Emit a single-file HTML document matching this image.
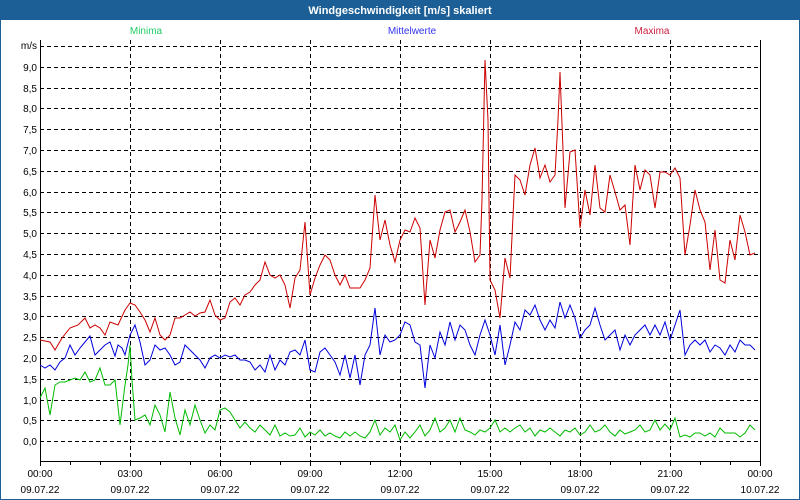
<!DOCTYPE html>
<html><head><meta charset="utf-8"><style>
html,body{margin:0;padding:0;width:800px;height:500px;overflow:hidden;background:#fff}
svg text{font-family:"Liberation Sans","DejaVu Sans",sans-serif}
</style></head><body>
<svg width="800" height="500" xmlns="http://www.w3.org/2000/svg">
<rect x="0" y="0" width="800" height="500" fill="#1c5f96"/>
<rect x="1" y="20" width="798" height="479" fill="#fff"/>
<text x="400" y="14" fill="#fff" font-size="11" font-weight="bold" text-anchor="middle">Windgeschwindigkeit [m/s] skaliert</text>
<text x="146" y="34" fill="#22cc66" font-size="10" text-anchor="middle">Minima</text>
<text x="412" y="34" fill="#3333ee" font-size="10" text-anchor="middle">Mittelwerte</text>
<text x="652" y="34" fill="#cc2244" font-size="10" text-anchor="middle">Maxima</text>
<g stroke="#000" stroke-width="1" stroke-dasharray="4,3" fill="none">
<path d="M40 46.5H760M40 67.5H760M40 88.5H760M40 108.5H760M40 129.5H760M40 150.5H760M40 171.5H760M40 192.5H760M40 212.5H760M40 233.5H760M40 254.5H760M40 275.5H760M40 296.5H760M40 316.5H760M40 337.5H760M40 358.5H760M40 379.5H760M40 400.5H760M40 420.5H760M40 441.5H760"/>
<path d="M130.5 40V461M220.5 40V461M310.5 40V461M400.5 40V461M490.5 40V461M580.5 40V461M670.5 40V461"/>
</g>
<path d="M40.5 40V461.5H760.5V40" stroke="#000" fill="none"/>
<g stroke="#000"><path d="M40.5 461v5M70.5 461v4M100.5 461v4M130.5 461v5M160.5 461v4M190.5 461v4M220.5 461v5M250.5 461v4M280.5 461v4M310.5 461v5M340.5 461v4M370.5 461v4M400.5 461v5M430.5 461v4M460.5 461v4M490.5 461v5M520.5 461v4M550.5 461v4M580.5 461v5M610.5 461v4M640.5 461v4M670.5 461v5M700.5 461v4M730.5 461v4M760.5 461v5"/></g>
<g font-size="10" fill="#000" text-anchor="end">
<text x="37" y="49">m/s</text>
<text x="37" y="71">9,0</text><text x="37" y="92">8,5</text><text x="37" y="112">8,0</text><text x="37" y="133">7,5</text><text x="37" y="154">7,0</text><text x="37" y="175">6,5</text><text x="37" y="196">6,0</text><text x="37" y="216">5,5</text><text x="37" y="237">5,0</text><text x="37" y="258">4,5</text><text x="37" y="279">4,0</text><text x="37" y="300">3,5</text><text x="37" y="320">3,0</text><text x="37" y="341">2,5</text><text x="37" y="362">2,0</text><text x="37" y="383">1,5</text><text x="37" y="404">1,0</text><text x="37" y="424">0,5</text><text x="37" y="445">0,0</text>
</g>
<g font-size="10" fill="#000" text-anchor="middle">
<text x="40" y="477">00:00</text><text x="40" y="493">09.07.22</text>
<text x="130" y="477">03:00</text><text x="130" y="493">09.07.22</text>
<text x="220" y="477">06:00</text><text x="220" y="493">09.07.22</text>
<text x="310" y="477">09:00</text><text x="310" y="493">09.07.22</text>
<text x="400" y="477">12:00</text><text x="400" y="493">09.07.22</text>
<text x="490" y="477">15:00</text><text x="490" y="493">09.07.22</text>
<text x="580" y="477">18:00</text><text x="580" y="493">09.07.22</text>
<text x="670" y="477">21:00</text><text x="670" y="493">09.07.22</text>
<text x="760" y="477">00:00</text><text x="760" y="493">10.07.22</text>
</g>
<polyline fill="none" stroke="#cc0000" stroke-width="1" points="40,340 50,342 55,350 62,338 70,328 78,325 85,318 90,328 95,325 100,328 105,335 110,322 118,325 125,310 130,303 135,305 140,312 145,320 150,332 155,318 160,335 165,340 170,335 175,318 180,318 185,315 190,312 195,316 200,313 205,312 210,300 215,315 220,320 225,318 230,302 235,298 240,305 245,295 250,292 255,285 260,280 265,262 270,275 275,278 280,275 285,285 290,308 295,278 300,270 305,222 310,295 315,278 320,265 325,255 330,260 335,275 340,285 345,275 350,288 355,288 360,288 365,280 370,268 375,195 380,240 385,220 390,245 395,262 400,240 405,230 410,232 415,218 420,228 425,305 430,240 435,258 440,230 445,212 450,210 455,232 460,222 465,210 470,232 475,262 480,255 482,200 485,60 488,120 490,280 495,290 500,318 505,258 510,278 515,175 520,180 525,195 530,165 535,148 540,178 545,165 550,182 555,175 558,120 560,72 563,150 565,208 570,152 575,150 580,228 585,190 590,215 595,165 600,208 605,212 610,175 615,192 620,210 625,205 630,245 635,165 640,190 645,170 650,175 655,208 660,172 665,172 670,175 675,168 680,178 685,255 690,225 695,190 700,210 705,222 710,270 715,230 720,280 725,283 730,240 735,260 740,215 745,232 750,255 755,253"/>
<polyline fill="none" stroke="#0000dd" stroke-width="1" points="40,365 45,368 50,365 55,370 60,362 65,358 70,345 75,355 80,348 85,342 90,336 95,355 100,350 105,345 110,342 115,356 118,345 122,348 125,355 130,335 135,325 140,342 145,365 150,360 155,345 160,350 165,348 170,355 175,365 180,362 185,345 190,350 195,355 200,360 205,368 210,358 215,355 220,358 225,355 230,357 235,355 240,360 245,360 250,362 255,370 260,365 265,372 270,355 275,370 280,360 285,365 290,352 295,350 300,355 305,340 310,370 315,372 320,352 325,348 330,355 335,362 340,375 345,355 350,378 355,355 360,385 365,355 370,345 375,308 380,355 385,335 390,342 395,340 400,335 405,322 410,325 415,342 420,345 425,388 430,345 435,358 440,332 445,345 450,322 455,340 460,325 465,330 470,345 475,355 480,335 485,320 490,335 495,355 500,325 505,365 510,345 515,322 520,330 525,310 530,315 535,305 540,320 545,330 550,320 555,328 560,302 565,318 570,305 575,318 580,338 585,330 590,325 595,308 600,325 605,340 610,335 615,330 620,350 625,335 630,345 635,335 640,330 645,325 650,335 655,325 660,335 665,322 670,340 675,325 680,310 685,355 690,345 695,340 700,345 705,340 710,352 715,345 720,348 725,355 730,345 735,352 740,340 745,345 750,345 755,350"/>
<polyline fill="none" stroke="#00bb00" stroke-width="1" points="40,398 45,388 50,415 55,385 60,382 65,382 70,380 75,378 80,380 85,372 90,382 95,380 100,368 105,385 110,385 115,380 120,425 125,385 128,365 130,345 132,380 135,420 140,418 145,415 150,425 155,405 160,415 165,432 170,392 175,418 180,435 185,410 190,425 195,405 200,420 205,433 210,425 215,430 220,410 225,408 230,412 235,420 240,428 245,422 250,428 255,432 260,425 265,430 270,435 275,425 280,436 285,433 290,436 295,435 300,428 305,437 310,432 315,435 320,430 325,436 330,433 335,436 340,438 345,432 350,436 355,432 360,436 365,438 370,432 375,420 380,435 385,428 390,432 395,425 400,440 405,432 410,438 415,432 420,425 425,436 430,430 435,418 440,432 445,428 450,420 455,432 460,418 465,430 470,432 475,435 480,430 485,432 490,428 495,420 500,432 505,428 510,432 515,428 520,425 525,432 530,428 535,436 540,430 545,432 550,428 555,432 560,436 565,430 570,432 575,428 580,435 585,432 590,425 595,432 600,430 605,425 610,432 615,436 620,430 625,434 630,432 635,430 640,425 645,432 650,430 655,420 660,430 665,424 670,430 675,418 680,437 685,435 690,437 695,433 700,433 705,436 710,433 715,437 720,428 725,433 730,433 735,433 740,437 745,433 750,425 755,430"/>
</svg>
</body></html>
